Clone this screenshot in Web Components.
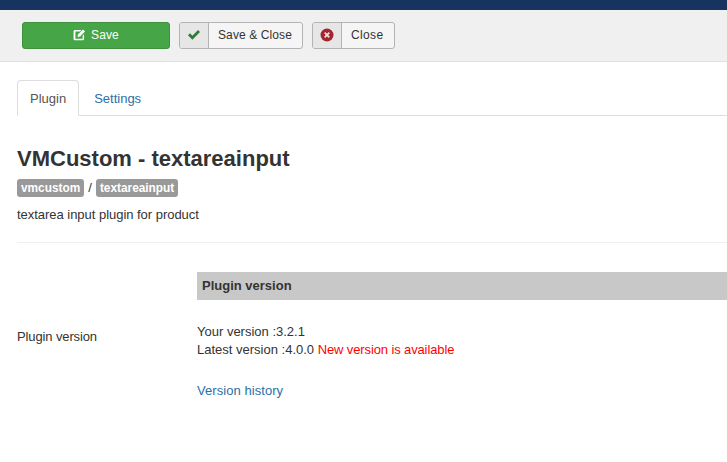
<!DOCTYPE html>
<html>
<head>
<meta charset="utf-8">
<title>VMCustom - textareainput</title>
<style>
  html, body { margin: 0; padding: 0; background: #fff; overflow: hidden; }
  body { font-family: "Liberation Sans", Arial, sans-serif; font-size: 13px; line-height: 18px; color: #333; }
</style>
</head>
<body>
<app-navbar></app-navbar>
<app-toolbar>
  <tool-button kind="save">Save</tool-button>
  <tool-button kind="check">Save &amp; Close</tool-button>
  <tool-button kind="close">Close</tool-button>
</app-toolbar>
<plugin-page></plugin-page>

<script>
class AppNavbar extends HTMLElement {
  constructor() {
    super();
    this.attachShadow({ mode: 'open' });
    this.shadowRoot.innerHTML = `
      <style>
        :host { display: block; height: 10px; background: #17335f; }
      </style>
    `;
  }
}

class AppToolbar extends HTMLElement {
  constructor() {
    super();
    this.attachShadow({ mode: 'open' });
    this.shadowRoot.innerHTML = `
      <style>
        :host {
          display: flex;
          gap: 9px;
          height: 52px;
          padding: 12px 22px 0;
          box-sizing: border-box;
          background: #f0f0f0;
          border-bottom: 1px solid #dfdfdf;
        }
      </style>
      <slot></slot>
    `;
  }
}

const ICONS = {
  save: `<svg width="13" height="13" viewBox="0 0 14 14"><path fill="#fff" d="M1.8 1.2H9L7.6 2.7H2.6v7.9h7.8V7.2l1.5-1.5v5a1.4 1.4 0 0 1-1.4 1.4H1.8A1.4 1.4 0 0 1 .6 10.700V2.600A1.4 1.4 0 0 1 1.800 1.200z"/><path fill="#fff" d="M10.800.6l2.200 2.200-5.400 5.400-2.700.5.500-2.700z"/></svg>`,
  check: `<svg width="14" height="12" viewBox="0 0 14 12"><path fill="#2f7d32" d="M1 6.300 3 4.300 5.400 6.700 11 1 13 3 5.400 10.700z"/></svg>`,
  close: `<svg width="14" height="14" viewBox="0 0 14 14"><circle cx="7" cy="7" r="6.500" fill="#a3252d"/><path stroke="#f3dcdc" stroke-width="1.800" d="M4.700 4.700l4.600 4.600M9.300 4.700l-4.600 4.600"/></svg>`
};

class ToolButton extends HTMLElement {
  constructor() {
    super();
    this.attachShadow({ mode: 'open' });
    const kind = this.getAttribute('kind');
    this.shadowRoot.innerHTML = `
      <style>
        :host {
          display: flex;
          height: 27px;
          box-sizing: border-box;
          border: 1px solid #b3b3b3;
          border-radius: 3px;
          background: #f5f5f5;
          color: #333;
          font-size: 12px;
          line-height: 25px;
          letter-spacing: .1px;
        }
        .icon {
          width: 28px;
          padding-bottom: 1px;
          display: flex;
          align-items: center;
          justify-content: center;
          background: #e6e6e6;
          border-right: 1px solid #b3b3b3;
          border-radius: 2px 0 0 2px;
        }
        .label { padding: 0 10px 0 9px; }
        :host([kind="close"]) { letter-spacing: .4px; }
        :host([kind="save"]) {
          width: 148px;
          justify-content: center;
          gap: 5px;
          background: #46a546;
          border-color: #3e8f3e;
          color: #fff;
        }
        :host([kind="save"]) .icon { width: auto; background: none; border: 0; }
        :host([kind="save"]) .label { padding: 0; }
      </style>
      <span class="icon">${ICONS[kind]}</span>
      <span class="label"><slot></slot></span>
    `;
  }
}

class PluginTabs extends HTMLElement {
  constructor() {
    super();
    this.attachShadow({ mode: 'open' });
    this.shadowRoot.innerHTML = `
      <style>
        :host {
          display: flex;
          height: 36px;
          box-sizing: border-box;
          border-bottom: 1px solid #ddd;
          font-size: 13px;
        }
        a {
          display: block;
          height: 36px;
          box-sizing: border-box;
          margin-right: 2px;
          padding: 0 12px;
          line-height: 36px;
          color: #2a70a8;
          border: 1px solid transparent;
          border-radius: 4px 4px 0 0;
        }
        a.active {
          color: #555;
          background: #fff;
          border-color: #ddd;
          border-bottom-color: #fff;
        }
      </style>
      <a class="active">Plugin</a>
      <a>Settings</a>
    `;
  }
}

class VersionPanel extends HTMLElement {
  constructor() {
    super();
    this.attachShadow({ mode: 'open' });
    this.shadowRoot.innerHTML = `
      <style>
        :host { display: block; }
        .row { display: grid; grid-template-columns: 180px 1fr; }
        .bar {
          grid-column: 2;
          height: 28px;
          padding-left: 5px;
          background: #c8c8c8;
          font-weight: bold;
          font-size: 13px;
          line-height: 27px;
        }
        .label { padding-top: 28px; letter-spacing: -.12px; }
        .body { padding-top: 23px; }
        .new { color: #f00; letter-spacing: -.12px; }
        .link { display: block; margin-top: 23px; color: #2a70a8; letter-spacing: .06px; }
      </style>
      <div class="row"><div class="bar">Plugin version</div></div>
      <div class="row">
        <div class="label">Plugin version</div>
        <div class="body">
          Your version :3.2.1<br>
          Latest version :4.0.0 <span class="new">New version is available</span>
          <a class="link">Version history</a>
        </div>
      </div>
    `;
  }
}

class PluginPage extends HTMLElement {
  constructor() {
    super();
    this.attachShadow({ mode: 'open' });
    this.shadowRoot.innerHTML = `
      <style>
        :host { display: block; padding: 18px 0 0 17px; }
        h1 { margin: 30px 0 0; font-size: 22px; line-height: 26px; font-weight: bold; color: #333; }
        .tags { display: flex; align-items: center; gap: 4px; margin-top: 7px; height: 18px; }
        .tag {
          background: #999;
          color: #fff;
          font-weight: bold;
          font-size: 11.85px;
          line-height: 18px;
          padding: 0 4px;
          border-radius: 3px;
        }
        p { margin: 9px 0 0; letter-spacing: -.03px; }
        hr { height: 1px; border: 0; background: #eee; margin: 18px 0 29px; }
      </style>
      <plugin-tabs></plugin-tabs>
      <h1>VMCustom - textareainput</h1>
      <div class="tags"><span class="tag">vmcustom</span> / <span class="tag">textareainput</span></div>
      <p>textarea input plugin for product</p>
      <hr>
      <version-panel></version-panel>
    `;
  }
}

customElements.define('app-navbar', AppNavbar);
customElements.define('app-toolbar', AppToolbar);
customElements.define('tool-button', ToolButton);
customElements.define('plugin-tabs', PluginTabs);
customElements.define('version-panel', VersionPanel);
customElements.define('plugin-page', PluginPage);
</script>
</body>
</html>
